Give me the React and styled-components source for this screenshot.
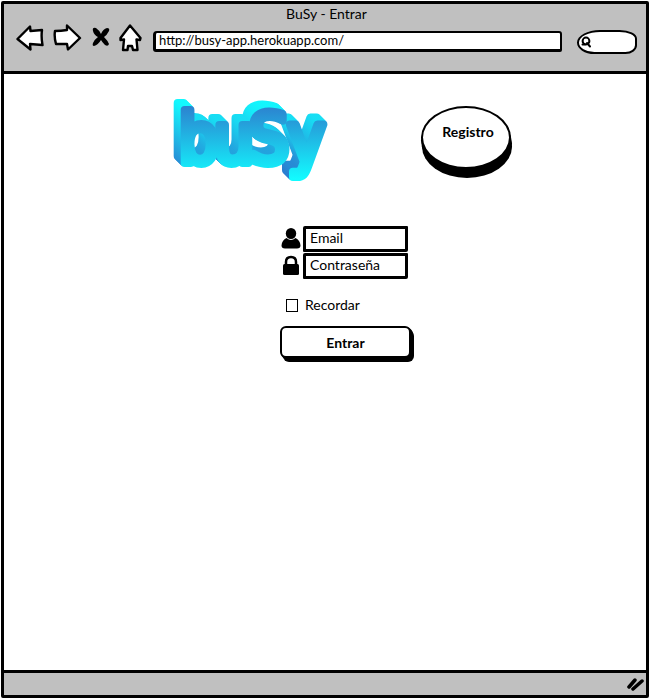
import React from "react";
import styled, { createGlobalStyle } from "styled-components";

const INK = "#000";
const CHROME = "#c0c0c0";
const FONT = 'Lato, "Open Sans", sans-serif';

const GlobalStyle = createGlobalStyle`
  *, *::before, *::after { box-sizing: border-box; }
  body { margin: 0; background: #fff; }
`;

const BrowserWindow = styled.div`
  display: flex;
  flex-direction: column;
  min-height: calc(100vh - 3px);
  margin: 1px 1px 2px;
  border: 3px solid ${INK};
  border-radius: 2px;
  background: #fff;
  color: ${INK};
  font-family: ${FONT};
  font-size: 14px;
`;

const Header = styled.header`
  padding: 0 9px 19px 12px;
  border-bottom: 3px solid ${INK};
  background: ${CHROME};
`;

const Title = styled.h1`
  margin: 0;
  font-size: 14px;
  font-weight: 400;
  line-height: 19px;
  text-align: center;
`;

const Toolbar = styled.div`
  display: flex;
  align-items: center;
  gap: 9px;
  height: 29px;
`;

const NavButton = styled.button`
  display: block;
  padding: 0;
  border: 0;
  background: none;
  line-height: 0;
  cursor: pointer;
`;

const AddressInput = styled.input`
  flex: 1;
  min-width: 0;
  height: 21px;
  margin: 8px 6px 0 2px;
  padding: 0 3px 2px;
  border: 2px solid ${INK};
  border-width: 2px 2px 3px 3px;
  border-radius: 4px 3px 2px 3px;
  background: #fff;
  color: ${INK};
  font: 13px ${FONT};
`;

const SearchBox = styled.label`
  display: flex;
  align-items: center;
  width: 60px;
  height: 24px;
  margin-top: 8px;
  padding-left: 2px;
  border: 2px solid ${INK};
  border-radius: 24px 18px 12px 18px / 13px 9px 9px 12px;
  background: #fff;
`;

const SearchInput = styled.input`
  flex: 1;
  min-width: 0;
  height: 16px;
  padding: 0 4px;
  border: 0;
  outline: 0;
  background: transparent;
  font: 13px ${FONT};
`;

const Page = styled.main`
  flex: 1;
  display: flex;
  flex-direction: column;
  align-items: center;
  padding: 19px 0 32px 34px;
`;

const Hero = styled.div`
  display: flex;
  align-items: flex-start;
  gap: 88px;
`;

const RoundButton = styled.button`
  width: 90px;
  height: 63px;
  margin: 13px 0 0;
  padding: 0 0 12px 4px;
  border: 2px solid ${INK};
  border-radius: 50%;
  background: #fff;
  box-shadow: 0 3px 0 ${INK}, 1px 6px 0 ${INK}, 1px 9px 0 ${INK};
  color: ${INK};
  font: 700 14px ${FONT};
  cursor: pointer;
`;

const LoginForm = styled.form`
  display: flex;
  flex-direction: column;
  width: 134px;
  margin: 38px 0 0 12px;
`;

const Field = styled.label`
  display: flex;
  align-items: center;
  gap: 2px;
  height: 27px;
`;

const FieldInput = styled.input`
  flex: 1;
  min-width: 0;
  height: 26px;
  margin-right: 7px;
  padding: 0 4px 2px;
  border: 3px solid ${INK};
  border-radius: 2px 1px 2px 1px;
  background: #fff;
  color: ${INK};
  font: 14px ${FONT};
  &::placeholder { color: ${INK}; opacity: 1; }
`;

const Remember = styled.label`
  display: flex;
  align-items: center;
  gap: 7px;
  margin: 17px 0 0 5px;
  line-height: 18px;
`;

const Checkbox = styled.input`
  appearance: none;
  width: 12px;
  height: 13px;
  margin: 0;
  border: 1px solid ${INK};
  background: #fff;
  &:checked { background: ${INK}; }
`;

const SubmitButton = styled.button`
  height: 32px;
  margin: 12px 4px 0 -1px;
  border: 2px solid ${INK};
  border-radius: 6px;
  background: #fff;
  box-shadow: 1px 1px 0 ${INK}, 2px 2px 0 ${INK}, 3px 4px 0 ${INK};
  color: ${INK};
  font: 700 14px ${FONT};
  cursor: pointer;
`;

const StatusBar = styled.footer`
  display: flex;
  justify-content: flex-end;
  align-items: center;
  height: 25px;
  padding-right: 2px;
  border-top: 3px solid ${INK};
  background: ${CHROME};
`;

const sketch = {
  fill: "#fff",
  stroke: INK,
  strokeWidth: 2.4,
  strokeLinejoin: "round",
  strokeLinecap: "round",
};

const BackIcon = () => (
  <svg width="28" height="26" viewBox="0 0 28 26" {...sketch}>
    <path d="M1.5 14 14 1.5 14.5 6 26 5Q25 12 26.5 20L14 19 14.5 24.5Z" />
  </svg>
);

const ForwardIcon = () => (
  <svg width="29" height="27" viewBox="0 0 29 27" {...sketch}>
    <path d="M2 7Q8 7 14 6L14 1.5 27 14 15 25.5 14 20 3 20Q1 13 2 7Z" />
  </svg>
);

const StopIcon = () => (
  <svg width="19" height="22" viewBox="-1 0 19 22">
    <path d="M1 4Q0 0 4 1 7 3 9 7 11 2 15 1 18 1 17 4 15 8 12 10 16 14 17 17 16 20 13 18 10 15 9 13 6 18 2 19 0 19 1 16 3 12 6 10 2 8 1 4Z" />
  </svg>
);

const HomeIcon = () => (
  <svg width="23" height="28" viewBox="0 0 23 28" {...sketch}>
    <path d="M11 1.5 21.5 14 21 16 17.5 15.5 18.5 26 14 26 13 22 9 22 8.5 26 4 26 5 15.5 1.5 16 1.5 14Z" />
  </svg>
);

const SearchIcon = () => (
  <svg width="11" height="12" viewBox="0 0 11 12" {...sketch} strokeWidth="2">
    <circle cx="5" cy="5" r="3.4" />
    <path d="M6 7 9 10.5M1.5 8.5 4 8.5" />
  </svg>
);

const UserIcon = () => (
  <svg width="20" height="21" viewBox="0 0 20 21">
    <ellipse cx="10" cy="5.5" rx="5.2" ry="5.5" />
    <path d="M5.5 10Q10 14 14.5 10 19 12 19.5 17.5 19.5 20.5 16 20.5H4Q.5 20.5 .5 17.5 1 12 5.5 10Z" />
  </svg>
);

const LockIcon = () => (
  <svg width="20" height="21" viewBox="0 0 20 21">
    <rect x="2" y="9" width="16" height="11" rx="1.5" />
    <path d="M5 10V7Q5 2 10 2 15 2 15 7V10" fill="none" stroke={INK} strokeWidth="2.5" />
  </svg>
);

const GripIcon = () => (
  <svg width="17" height="14" viewBox="0 0 17 14" stroke={INK} strokeWidth="3.5" strokeLinecap="round">
    <path d="M2 10 8 3M6 12 15 4" />
  </svg>
);

const DEPTHS = [7, 6, 5, 4, 3, 2, 1];

const Logo = () => (
  <svg width="160" height="94" viewBox="0 0 160 94" role="img" aria-label="buSy">
    <defs>
      <linearGradient id="side" gradientUnits="userSpaceOnUse" x1="0" y1="12" x2="0" y2="90">
        <stop offset="0" stopColor="#12fbff" />
        <stop offset="0.9" stopColor="#2a7ed0" />
      </linearGradient>
      <linearGradient id="face" gradientUnits="userSpaceOnUse" x1="0" y1="10" x2="0" y2="86">
        <stop offset="0" stopColor="#2d7dcd" />
        <stop offset="1" stopColor="#12fbff" />
      </linearGradient>
      <text
        id="word"
        x="6 41 76 115"
        y="70"
        fontFamily='"DejaVu Sans Condensed", "DejaVu Sans", sans-serif'
        fontSize="70"
        strokeWidth="8"
        strokeLinejoin="round"
      >
        buSy
      </text>
    </defs>
    {DEPTHS.map((d) => (
      <use key={d} href="#word" x={-d} y={-d} fill="url(#side)" stroke="url(#side)" />
    ))}
    <use href="#word" fill="url(#face)" stroke="url(#face)" />
  </svg>
);

export default function App() {
  return (
    <>
      <GlobalStyle />
      <BrowserWindow>
        <Header>
          <Title>BuSy - Entrar</Title>
          <Toolbar>
            <NavButton aria-label="Atrás"><BackIcon /></NavButton>
            <NavButton aria-label="Adelante"><ForwardIcon /></NavButton>
            <NavButton aria-label="Detener"><StopIcon /></NavButton>
            <NavButton aria-label="Inicio"><HomeIcon /></NavButton>
            <AddressInput aria-label="Dirección" defaultValue="http://busy-app.herokuapp.com/" />
            <SearchBox>
              <SearchIcon />
              <SearchInput aria-label="Buscar" />
            </SearchBox>
          </Toolbar>
        </Header>
        <Page>
          <Hero>
            <Logo />
            <RoundButton type="button">Registro</RoundButton>
          </Hero>
          <LoginForm onSubmit={(e) => e.preventDefault()}>
            <Field>
              <UserIcon />
              <FieldInput type="email" aria-label="Email" placeholder="Email" />
            </Field>
            <Field>
              <LockIcon />
              <FieldInput type="password" aria-label="Contraseña" placeholder="Contraseña" />
            </Field>
            <Remember>
              <Checkbox type="checkbox" />
              Recordar
            </Remember>
            <SubmitButton type="submit">Entrar</SubmitButton>
          </LoginForm>
        </Page>
        <StatusBar>
          <GripIcon />
        </StatusBar>
      </BrowserWindow>
    </>
  );
}
